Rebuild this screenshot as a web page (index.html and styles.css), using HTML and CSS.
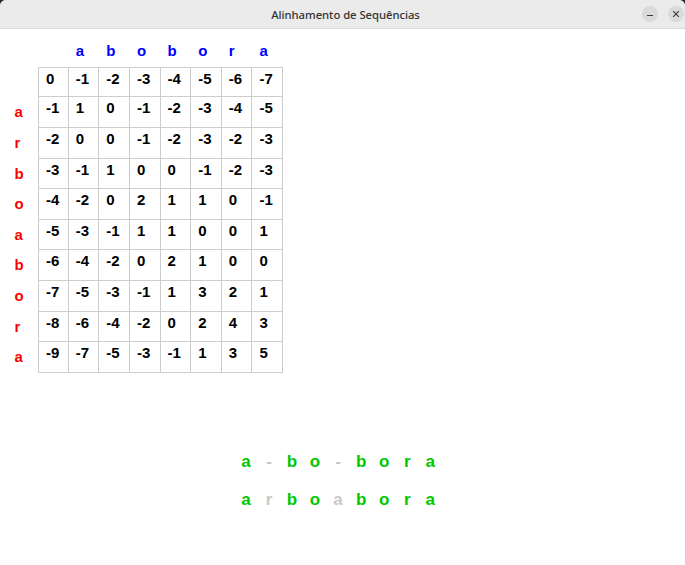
FILE: index.html
```html
<!DOCTYPE html>
<html lang="pt">
<head>
<meta charset="utf-8">
<title>Alinhamento de Sequências</title>
<link rel="stylesheet" href="styles.css">
</head>
<body>
<div class="window">
  <header class="titlebar">
    <span class="title">Alinhamento de Sequências</span>
    <div class="controls">
      <button class="ctl" aria-label="Minimizar">
        <svg width="10" height="10" viewBox="0 0 10 10"><line x1="2" y1="6.5" x2="8" y2="6.5" stroke="#3d3d3d" stroke-width="1.2"/></svg>
      </button>
      <button class="ctl" aria-label="Fechar">
        <svg width="10" height="10" viewBox="0 0 10 10"><path d="M2.2 2.2 L7.8 7.8 M7.8 2.2 L2.2 7.8" stroke="#3d3d3d" stroke-width="1.2"/></svg>
      </button>
    </div>
  </header>
  <main class="content">
    <div class="matrix">
      <div class="lbl"></div>
      <div class="lbl col"></div><div class="lbl col">a</div><div class="lbl col">b</div><div class="lbl col">o</div><div class="lbl col">b</div><div class="lbl col">o</div><div class="lbl col">r</div><div class="lbl col">a</div>

      <div class="lbl row"></div>
      <div class="c top left">0</div><div class="c top">-1</div><div class="c top">-2</div><div class="c top">-3</div><div class="c top">-4</div><div class="c top">-5</div><div class="c top">-6</div><div class="c top">-7</div>

      <div class="lbl row">a</div>
      <div class="c left">-1</div><div class="c">1</div><div class="c">0</div><div class="c">-1</div><div class="c">-2</div><div class="c">-3</div><div class="c">-4</div><div class="c">-5</div>

      <div class="lbl row">r</div>
      <div class="c left">-2</div><div class="c">0</div><div class="c">0</div><div class="c">-1</div><div class="c">-2</div><div class="c">-3</div><div class="c">-2</div><div class="c">-3</div>

      <div class="lbl row">b</div>
      <div class="c left">-3</div><div class="c">-1</div><div class="c">1</div><div class="c">0</div><div class="c">0</div><div class="c">-1</div><div class="c">-2</div><div class="c">-3</div>

      <div class="lbl row">o</div>
      <div class="c left">-4</div><div class="c">-2</div><div class="c">0</div><div class="c">2</div><div class="c">1</div><div class="c">1</div><div class="c">0</div><div class="c">-1</div>

      <div class="lbl row">a</div>
      <div class="c left">-5</div><div class="c">-3</div><div class="c">-1</div><div class="c">1</div><div class="c">1</div><div class="c">0</div><div class="c">0</div><div class="c">1</div>

      <div class="lbl row">b</div>
      <div class="c left">-6</div><div class="c">-4</div><div class="c">-2</div><div class="c">0</div><div class="c">2</div><div class="c">1</div><div class="c">0</div><div class="c">0</div>

      <div class="lbl row">o</div>
      <div class="c left">-7</div><div class="c">-5</div><div class="c">-3</div><div class="c">-1</div><div class="c">1</div><div class="c">3</div><div class="c">2</div><div class="c">1</div>

      <div class="lbl row">r</div>
      <div class="c left">-8</div><div class="c">-6</div><div class="c">-4</div><div class="c">-2</div><div class="c">0</div><div class="c">2</div><div class="c">4</div><div class="c">3</div>

      <div class="lbl row">a</div>
      <div class="c left">-9</div><div class="c">-7</div><div class="c">-5</div><div class="c">-3</div><div class="c">-1</div><div class="c">1</div><div class="c">3</div><div class="c">5</div>
    </div>

    <div class="alignment">
      <div class="seq">
        <span class="m">a</span><span class="g">-</span><span class="m">b</span><span class="m">o</span><span class="g">-</span><span class="m">b</span><span class="m">o</span><span class="m">r</span><span class="m">a</span>
      </div>
      <div class="seq">
        <span class="m">a</span><span class="g">r</span><span class="m">b</span><span class="m">o</span><span class="g">a</span><span class="m">b</span><span class="m">o</span><span class="m">r</span><span class="m">a</span>
      </div>
    </div>
  </main>
</div>
</body>
</html>
```

FILE: styles.css
```css
html {
  background: #2a2a2a;
}
body {
  margin: 0;
  width: 685px;
  height: 565px;
  overflow: hidden;
}
.window {
  height: 565px;
  background: #ffffff;
  border-radius: 6px 6px 0 0;
  overflow: hidden;
  font-family: "Liberation Sans", Arial, sans-serif;
}
.titlebar {
  height: 28px;
  background: #ebebeb;
  border-bottom: 1px solid #dadada;
  display: flex;
  align-items: center;
  justify-content: center;
  position: relative;
}
.title {
  font-family: "Noto Sans", "DejaVu Sans", sans-serif;
  font-size: 11.3px;
  font-weight: 500;
  color: #333333;
  letter-spacing: -0.05px;
  padding-left: 6px;
}
.controls {
  position: absolute;
  right: 1px;
  top: 6px;
  display: flex;
  gap: 10px;
}
.ctl {
  width: 16px;
  height: 16px;
  border: 0;
  padding: 0;
  border-radius: 50%;
  background: #dadada;
  display: flex;
  align-items: center;
  justify-content: center;
}
.content {
  padding: 7px 0 0 7.4px;
}
.matrix {
  display: grid;
  grid-template-columns: repeat(9, 30.625px);
  grid-template-rows: repeat(11, 30.625px);
  font-weight: bold;
  font-size: 15px;
}
.lbl {
  line-height: 29px;
  padding-left: 7px;
}
.lbl.col {
  color: #0000ff;
}
.lbl.row {
  color: #ff0000;
}
.c {
  box-sizing: border-box;
  border-right: 1px solid #cdcdcd;
  border-bottom: 1px solid #cdcdcd;
  color: #000000;
  padding: 1px 0 0 7px;
  line-height: 20px;
}
.c.top {
  border-top: 1px solid #cdcdcd;
}
.c.left {
  border-left: 1px solid #cdcdcd;
}
.alignment {
  margin-top: 70px;
  margin-left: 227px;
  font-weight: bold;
  font-size: 17px;
}
.seq {
  display: flex;
  line-height: 38px;
}
.seq span {
  width: 23.06px;
  text-align: center;
}
.m {
  color: #00c800;
}
.g {
  color: #c8c8c8;
}
```
